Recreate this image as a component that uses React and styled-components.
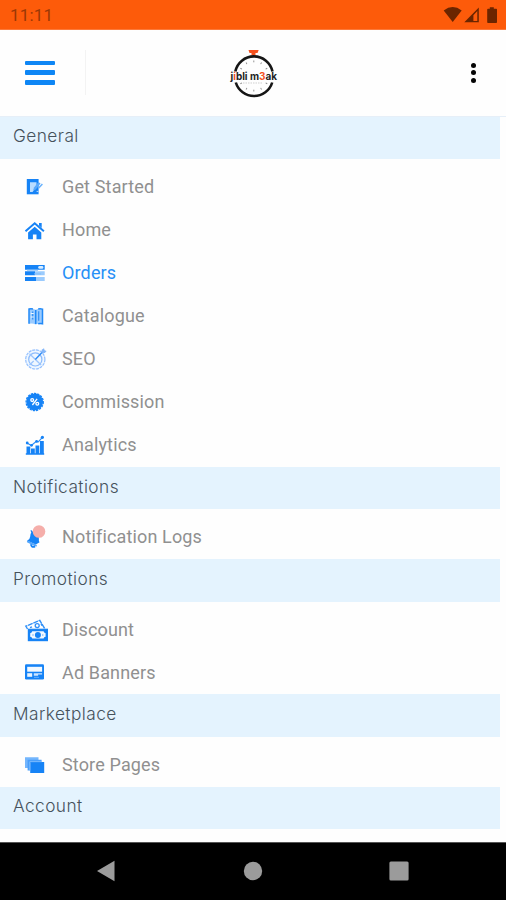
import styled, { createGlobalStyle } from "styled-components";
import React, { useState } from "react";


const sections = [
    {
        title: "General",
        items: [
            { name: "Get Started", icon: <StartIcon /> },
            { name: "Home", icon: <HomeIcon /> },
            { name: "Orders", icon: <OrdersIcon /> },
            { name: "Catalogue", icon: <CatalogueIcon /> },
            { name: "SEO", icon: <SeoIcon /> },
            { name: "Commission", icon: <CommissionIcon /> },
            { name: "Analytics", icon: <AnalyticsIcon /> },
        ],
    },
    { title: "Notifications", items: [{ name: "Notification Logs", icon: <BellIcon /> }] },
    {
        title: "Promotions",
        items: [
            { name: "Discount", icon: <DiscountIcon /> },
            { name: "Ad Banners", icon: <BannerIcon /> },
        ],
    },
    { title: "Marketplace", items: [{ name: "Store Pages", icon: <PagesIcon /> }] },
    { title: "Account", items: [] },
];

export default function App() {

    const [ active, setActive ] = useState("Orders");

    return (
        <Screen>
            <GlobalStyle />
            <StatusBar>
                <span>11:11</span>
                <StatusIcons />
            </StatusBar>

            <Header>
                <MenuButton aria-label="menu"><i /><i /><i /></MenuButton>
                <Divider />
                <LogoArea><Logo /></LogoArea>
                <MoreButton aria-label="more"><i /><i /><i /></MoreButton>
            </Header>

            <Menu>
                {sections.map((section) => (
                    <section key={section.title}>
                        <SectionTitle>{section.title}</SectionTitle>
                        {section.items.length > 0 && (
                            <Items>
                                {section.items.map((item) => (
                                    <Item
                                    key={item.name}
                                    active={item.name === active}
                                    onClick={() => setActive(item.name)}>
                                        {item.icon}
                                        <span>{item.name}</span>
                                    </Item>
                                ))}
                            </Items>
                        )}
                    </section>
                ))}
            </Menu>

            <NavBar>
                <NavIcon viewBox="0 0 20 22"><path d="M1 11 18.5 .8v20.4z" /></NavIcon>
                <NavIcon viewBox="0 0 20 22"><circle cx="10" cy="11" r="9.2" /></NavIcon>
                <NavIcon viewBox="0 0 20 22"><rect x=".4" y="1.4" width="19.2" height="19.2" rx="1.5" /></NavIcon>
            </NavBar>
        </Screen>
    )
}

function StatusIcons() {
    return (
        <svg width="56" height="18" viewBox="443 6 56 18" fill="#6b2500">
            <path d="M443.7 10.4q9-6.6 18 0L452.7 22z" />
            <path d="M464.3 22.3 478.8 7.5v14.8z M473.4 15.2v5.7h3.9V11z" fillRule="evenodd" />
            <path d="M489.8 7.3h4v1.5h2.4q.8 0 .8.8v12.6q0 .8-.8.8h-8.2q-.8 0-.8-.8V9.6q0-.8.8-.8h1.8z" />
        </svg>
    )
}

function Logo() {
    const marks = [0, 30, 60, 120, 150, 180, 210, 240, 300, 330]
    return (
        <svg width="50" height="50" viewBox="229 48 50 50">
            <path d="M248.5 50h10.2l-1.2 3h-2v2.5h-4V53h-2z" fill="#f4511e" />
            <path d="M235.3 71.5a19 19 0 0 1 37.2 0M235.8 82.5a19 19 0 0 0 36.4 0" fill="none" stroke="#161616" strokeWidth="2.6" />
            {marks.map((angle) => (
                <path key={angle} d="M253.8 60.5v1.8" stroke="#888" strokeWidth=".9" transform={`rotate(${angle} 253.8 76)`} />
            ))}
            <LogoText x="230.5" y="80" textLength="46.5" lengthAdjust="spacingAndGlyphs">
                j<tspan fill="#f4511e">i</tspan>bli m<tspan fill="#f4511e">3</tspan>ak
            </LogoText>
            <path d="M243 83h20" stroke="#bbb" strokeWidth=".7" strokeDasharray="1.5 1" />
        </svg>
    )
}

function StartIcon() {
    return (
        <Icon>
            <path d="M2.8 4h11.8v15.3H2.8z" />
            <path d="M6 7.2h6.5v5L8.5 17H6z" fill="#b9dcff" />
            <path d="m9 15.8 1-3.2L14.5 7l2 1.6-4.7 5.9z" fill="#5aa9fb" />
            <path d="m14.2 13.5 4.2-4.6" stroke="#69b2fc" strokeWidth="1.5" />
            <path d="M12.6 16.4h1.8" stroke="#b9dcff" />
        </Icon>
    )
}

function HomeIcon() {
    return (
        <Icon>
            <path d="m1.5 13.2 9.2-7.9 9.2 7.9" fill="none" stroke="#1683f6" strokeWidth="2" />
            <path d="M15 5h2.7v5L15 7.6z" />
            <path d="m10.7 8.8 6.6 5.6v6.8h-4.8v-4.8H8.9v4.8H4.1v-6.8z" />
        </Icon>
    )
}

function OrdersIcon() {
    return (
        <Icon>
            <path d="M1 4h19.7v4.7H1zM1 10.3h10v4H1zM1 15.9h11v4H1z" />
            <path d="M11 10.3h9.7v4H11zM12 15.9h8.7v4H12z" fill="#9bcbfd" />
            <path d="M3 9.2h11M10 12.9h7" stroke="#83bdf9" />
            <rect x="14.2" y="5" width="5.2" height="2.8" rx="1.4" fill="#d9edff" />
        </Icon>
    )
}

function CatalogueIcon() {
    return (
        <Icon>
            <path d="M5 5.1q3.4-.8 6.7.7 3.4-1.5 6.8-.7v14.7q-3.4-.8-6.8.6-3.3-1.4-6.7-.6z" fill="#9acbff" />
            <path d="M5 19.8V5.1q2-.5 4 0M14.2 5q2.1-.5 4.3.1v14.7q-2.2-.5-4.3 0M11.7 6v14" fill="none" stroke="#2189f7" strokeWidth="1.5" />
            <path d="M8.7 7.5v8M14.7 7.3v9.4" stroke="#308ff5" strokeWidth="1.2" />
            <path d="M6.8 9.5h3M6.8 13h3" stroke="#eef7ff" />
        </Icon>
    )
}

function SeoIcon() {
    return (
        <Icon>
            <circle cx="11.3" cy="12.4" r="9.6" fill="#eff7ff" stroke="#92bfff" strokeWidth="1.2" strokeDasharray="3 .8" />
            <circle cx="11.3" cy="12.4" r="6.6" fill="none" stroke="#8cbbfc" strokeWidth="1.2" />
            <path d="m5.5 6.8 11.6 11.2M5.5 18l4.2-4" stroke="#9cc5fd" strokeWidth="1.3" />
            <path d="m11.3 12.4 7.4-7.6" stroke="#2f8bf5" strokeWidth="1.4" />
            <path d="m17.3 5.8.4-3 2.3-1.6.6 2.1 2 .6-1.8 2.2z" fill="#83b6f9" />
        </Icon>
    )
}

function CommissionIcon() {
    return (
        <Icon>
            <circle cx="10.7" cy="12" r="8.4" />
            <circle cx="10.7" cy="12" r="8.6" fill="none" stroke="#1683f6" strokeWidth="1.3" strokeDasharray="2.2 1.1" />
            <g fill="none" stroke="#fff" strokeWidth="1.3">
                <circle cx="8.2" cy="10.1" r="1.4" />
                <circle cx="13.3" cy="13.8" r="1.4" />
                <path d="m8.4 15 4.7-6.2" />
            </g>
        </Icon>
    )
}

function AnalyticsIcon() {
    return (
        <Icon>
            <path d="M2.5 13.5h3.8V21H2.5zM7 15.5h3.8V21H7zM11.5 12.5h3.8V21h-3.8zM16 8h3.8v13H16zM1.8 20.3h18.4v1.4H1.8z" />
            <path d="m3 10 4.3 2.5 5-4.2 2 .5 4.3-4.6" fill="none" stroke="#2e8ff6" strokeWidth="1.2" />
            <circle cx="3.2" cy="10" r="1.4" />
            <circle cx="7.5" cy="12.3" r="1.4" />
            <circle cx="12.6" cy="8.4" r="1.4" />
            <circle cx="18.4" cy="4.3" r="1.6" />
        </Icon>
    )
}

function BellIcon() {
    return (
        <Icon>
            <path d="M6.4 5.6q1.4-.8 2.2 1 2.6-.1 5 2.4 2.2 2.2 1.3 5.6-.3 1.5.7 2.6l-3.8 2.4-8.7-3.9q2.8-1 3.1-4.3.2-2.5 1.1-3.8z" />
            <path d="m3.8 16.6 8.2 4" stroke="#57a7fb" strokeWidth="1.8" strokeLinecap="round" />
            <path d="M7 19.2q.3 3.8 4 2.3" fill="none" stroke="#1683f6" strokeWidth="1.9" />
            <circle cx="15" cy="6.5" r="6.3" fill="#f5aeaa" />
        </Icon>
    )
}

function DiscountIcon() {
    return (
        <Icon>
            <path d="m3.5 12-1.7-2.8L15.8 3.4l4.8 8.1" fill="#fff" stroke="#2f8ff7" strokeWidth="1.4" strokeDasharray="5 .7" />
            <path d="m6 10.7 2-.9M17 6.8l1 2" stroke="#2f8ff7" strokeWidth="1.3" />
            <circle cx="13.2" cy="8.6" r="2" fill="none" stroke="#2f8ff7" strokeWidth="1.3" />
            <rect x="4.4" y="12.3" width="19" height="11.3" fill="#1683f6" stroke="#1683f6" strokeWidth="1.2" />
            <path d="M8.2 14.3h11.4q.2 1.7 2 1.9v3.5q-1.8.2-2 1.9H8.2q-.2-1.7-2-1.9v-3.5q1.8-.2 2-1.9z" fill="#f3f9ff" />
            <circle cx="13.9" cy="18" r="3" />
            <path d="M8.5 18h1M18.3 18h1" stroke="#1683f6" />
        </Icon>
    )
}

function BannerIcon() {
    return (
        <Icon>
            <rect x="1" y="4.2" width="19" height="15.4" rx="1.3" />
            <path d="M3.2 6.8h14.9v4.9H3.2z" fill="#f3f9ff" />
            <path d="M3.2 13.2h5v3.6h-5z" fill="#eaf5ff" />
            <path d="M9.8 13.2h8.3v1.3h-4v1.3H9.8z" fill="#cfe6ff" />
            <path d="M10 17.3h5" stroke="#7dbbff" strokeWidth=".8" />
        </Icon>
    )
}

function PagesIcon() {
    return (
        <Icon>
            <path d="M1 5.2h13.5v3H4v7.8H1z" fill="#74b6fd" />
            <path d="M3.6 7.7h14v3H6.2v7.8H3.6z" fill="#4a9ffb" />
            <path d="M6.2 10h14v11h-14z" />
            <path d="M5.8 18.5V9.7h12" fill="none" stroke="#91c6fe" strokeWidth=".7" />
        </Icon>
    )
}


const GlobalStyle = createGlobalStyle`
* {
    box-sizing: border-box;
}
body {
    margin: 0;
    background-color: #fff;
}
`

const Screen = styled.div`
width: 506px;
height: 900px;
display: flex;
flex-direction: column;
overflow: hidden;
background-color: #fefefe;
font-family: "Roboto", sans-serif;
`

const StatusBar = styled.div`
height: 30px;
flex-shrink: 0;
display: flex;
align-items: center;
justify-content: space-between;
padding: 1px 7px 0 10px;
background-color: #fd5b0a;
border-bottom: 1px solid #fc7939;
color: #9a3806;
font-size: 17px;
letter-spacing: 0.2px;
`

const Header = styled.header`
height: 86.5px;
flex-shrink: 0;
display: flex;
align-items: center;
padding: 0 25px;
border-bottom: 1px solid #e6eff8;
`

const MenuButton = styled.button`
width: 30px;
padding: 0;
border: none;
background: none;
display: flex;
flex-direction: column;
gap: 5px;
i {
    height: 4.6px;
    border-radius: 1px;
    background-color: #0e86f5;
}
`

const Divider = styled.div`
width: 1px;
height: 45px;
margin-left: 30px;
background-color: #f3f3f3;
`

const LogoArea = styled.div`
flex: 1;
display: flex;
padding-left: 143px;
`

const LogoText = styled.text`
font-family: "Inter", sans-serif;
font-size: 10px;
font-weight: 700;
fill: #222;
`

const MoreButton = styled.button`
width: 16px;
padding: 0;
border: none;
background: none;
display: flex;
flex-direction: column;
align-items: center;
gap: 2.6px;
i {
    width: 5px;
    height: 5px;
    border-radius: 50%;
    background-color: #050505;
}
`

const Menu = styled.nav`
flex: 1;
min-height: 0;
padding-right: 6px;
overflow: hidden;
`

const SectionTitle = styled.h2`
height: 42.5px;
margin: 0;
padding: 0 13px 4px;
display: flex;
align-items: center;
background-color: #e4f3fe;
color: #46525c;
font-family: "Inter", sans-serif;
font-size: 17.3px;
font-weight: 300;
letter-spacing: 0.43px;
`

const Items = styled.div`
padding: 6.1px 0 0.7px;
`

const Item = styled.div`
height: 43px;
display: flex;
align-items: center;
gap: 14px;
padding-left: 24px;
color: ${(props) => props.active ? "#2690f7" : "#909090"};
font-size: 18px;
letter-spacing: 0.15px;
cursor: pointer;
`

const Icon = styled.svg.attrs({ viewBox: "0 0 24 24" })`
width: 24px;
height: 24px;
flex-shrink: 0;
overflow: visible;
fill: #1683f6;
`

const NavBar = styled.footer`
height: 58px;
flex-shrink: 0;
display: flex;
align-items: center;
justify-content: space-between;
padding: 0 97px 2px 96px;
background-color: #000;
border-top: 1px solid #555;
`

const NavIcon = styled.svg`
width: 20px;
height: 22px;
fill: #9b9b9b;
`
